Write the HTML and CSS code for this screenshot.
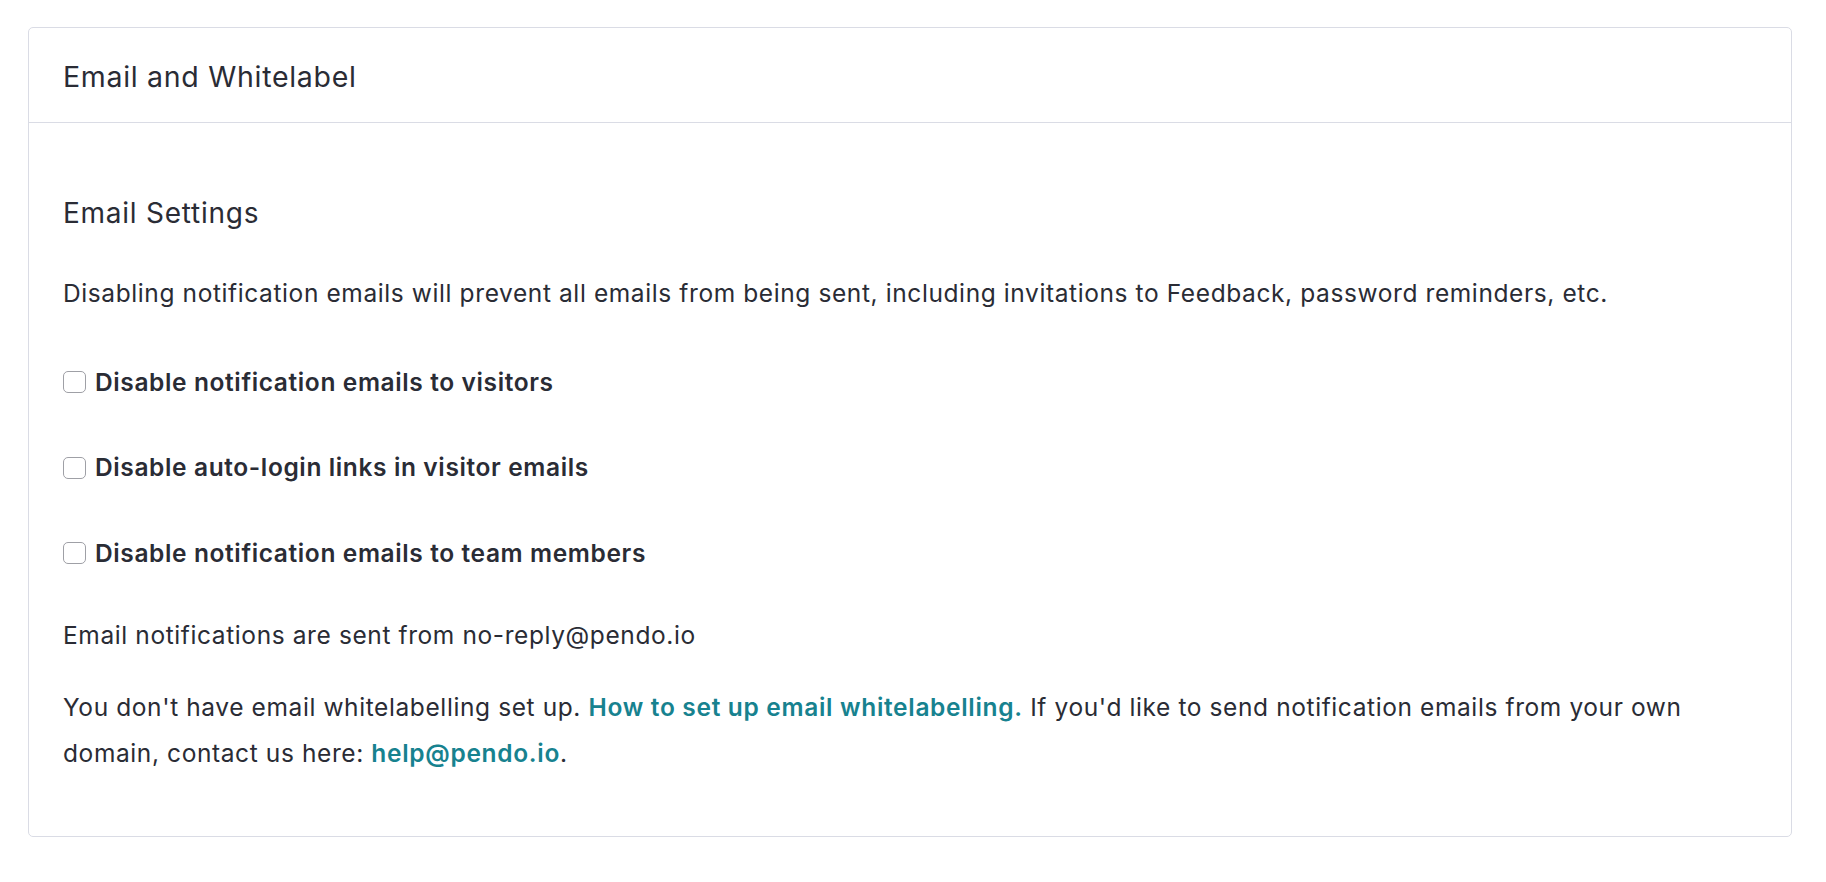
FILE: index.html
```html
<!DOCTYPE html>
<html lang="en">
<head>
<meta charset="utf-8">
<title>Email and Whitelabel</title>
<link rel="stylesheet" href="styles.css">
</head>
<body>
<section class="card">
  <header class="card-header">
    <h2 class="card-title">Email and Whitelabel</h2>
  </header>
  <div class="card-body">
    <h3 class="section-title">Email Settings</h3>
    <p class="text intro">Disabling notification emails will prevent all emails from being sent, including invitations to Feedback, password reminders, etc.</p>
    <label class="check-row"><input type="checkbox" class="check"><span class="check-label">Disable notification emails to visitors</span></label>
    <label class="check-row"><input type="checkbox" class="check"><span class="check-label">Disable auto-login links in visitor emails</span></label>
    <label class="check-row"><input type="checkbox" class="check"><span class="check-label">Disable notification emails to team members</span></label>
    <p class="text sender">Email notifications are sent from no-reply@pendo.io</p>
    <p class="text whitelabel">You don't have email whitelabelling set up. <a class="link" href="#">How to set up email whitelabelling.</a> If you'd like to send notification emails from your own domain, contact us here: <a class="link" href="#">help@pendo.io</a>.</p>
  </div>
</section>
</body>
</html>
```
FILE: styles.css
```css
* { box-sizing: border-box; }

html, body {
  margin: 0;
  padding: 0;
  background: #ffffff;
}

body {
  font-family: "Inter", "Liberation Sans", sans-serif;
  color: #2a2c35;
  padding: 27px 34px 0 28px;
}

.card {
  border: 1px solid #dadce5;
  border-radius: 5px;
  background: #fff;
}

.card-header {
  height: 95px;
  border-bottom: 1px solid #dadce5;
  display: flex;
  align-items: center;
  padding: 3px 34px 0;
}

.card-title {
  margin: 0;
  font-size: 28.5px;
  font-weight: 400;
  line-height: 40px;
  letter-spacing: 0.7px;
}

.card-body {
  padding: 70px 34px 60px;
}

.section-title {
  margin: 0 0 38px;
  font-size: 28px;
  font-weight: 400;
  line-height: 40px;
  letter-spacing: 0.75px;
}

.text {
  margin: 0;
  font-size: 24.5px;
  line-height: 45.5px;
  letter-spacing: 0.6px;
}

.intro { margin-bottom: 43px; }

.check-row {
  display: flex;
  align-items: center;
  gap: 9px;
  margin-bottom: 40px;
  font-size: 24.5px;
  line-height: 45.5px;
  cursor: pointer;
}

.check-row:last-of-type { margin-bottom: 0; }

.check {
  appearance: none;
  -webkit-appearance: none;
  margin: 0;
  width: 23px;
  height: 22px;
  border: 1px solid #9fa0a6;
  border-radius: 5px;
  background: #fff;
  flex: none;
}

.check-label {
  font-weight: 600;
  letter-spacing: 0.62px;
}

.sender {
  margin-top: 37px;
  margin-bottom: 26.5px;
}

.link {
  color: #17828f;
  font-weight: 600;
  text-decoration: none;
  letter-spacing: 0.68px;
}
```
